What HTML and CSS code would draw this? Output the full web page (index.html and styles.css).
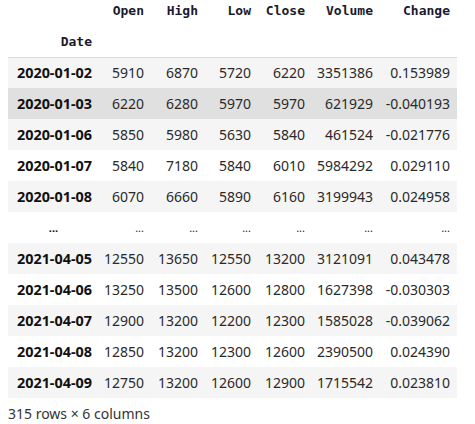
FILE: index.html
```html
<!DOCTYPE html>
<html>
<head>
<meta charset="utf-8">
<link rel="stylesheet" href="styles.css">
</head>
<body>
<div class="frame">
<table class="df">
  <colgroup>
    <col class="c-date"><col class="c-open"><col class="c-high"><col class="c-low"><col class="c-close"><col class="c-vol"><col class="c-chg">
  </colgroup>
  <thead>
    <tr class="h1"><th></th><th>Open</th><th>High</th><th>Low</th><th>Close</th><th>Volume</th><th>Change</th></tr>
    <tr class="h2"><th>Date</th><th></th><th></th><th></th><th></th><th></th><th></th></tr>
  </thead>
  <tbody>
    <tr class="odd"><th>2020-01-02</th><td>5910</td><td>6870</td><td>5720</td><td>6220</td><td>3351386</td><td>0.153989</td></tr>
    <tr class="hover"><th>2020-01-03</th><td>6220</td><td>6280</td><td>5970</td><td>5970</td><td>621929</td><td>-0.040193</td></tr>
    <tr class="odd"><th>2020-01-06</th><td>5850</td><td>5980</td><td>5630</td><td>5840</td><td>461524</td><td>-0.021776</td></tr>
    <tr><th>2020-01-07</th><td>5840</td><td>7180</td><td>5840</td><td>6010</td><td>5984292</td><td>0.029110</td></tr>
    <tr class="odd"><th>2020-01-08</th><td>6070</td><td>6660</td><td>5890</td><td>6160</td><td>3199943</td><td>0.024958</td></tr>
    <tr class="dots"><th>...</th><td>...</td><td>...</td><td>...</td><td>...</td><td>...</td><td>...</td></tr>
    <tr class="odd"><th>2021-04-05</th><td>12550</td><td>13650</td><td>12550</td><td>13200</td><td>3121091</td><td>0.043478</td></tr>
    <tr><th>2021-04-06</th><td>13250</td><td>13500</td><td>12600</td><td>12800</td><td>1627398</td><td>-0.030303</td></tr>
    <tr class="odd"><th>2021-04-07</th><td>12900</td><td>13200</td><td>12200</td><td>12300</td><td>1585028</td><td>-0.039062</td></tr>
    <tr><th>2021-04-08</th><td>12850</td><td>13200</td><td>12300</td><td>12600</td><td>2390500</td><td>0.024390</td></tr>
    <tr class="odd"><th>2021-04-09</th><td>12750</td><td>13200</td><td>12600</td><td>12900</td><td>1715542</td><td>0.023810</td></tr>
  </tbody>
</table>
<p class="shape">315 rows × 6 columns</p>
</div>
</body>
</html>
```

FILE: styles.css
```css
html, body {
  margin: 0;
  padding: 0;
  background: #ffffff;
}
.frame {
  padding: 0 8px;
  font-family: "Noto Sans", "Noto Sans CJK KR", sans-serif;
  color: #2a2a2a;
}
.df {
  border-collapse: collapse;
  border-spacing: 0;
  table-layout: fixed;
  width: 449px;
  font-size: 14px;
}
.c-date { width: 91px; }
.c-open { width: 52px; }
.c-high { width: 54px; }
.c-low { width: 53px; }
.c-close { width: 54px; }
.c-vol { width: 68px; }
.c-chg { width: 77px; }
.df th, .df td {
  padding: 0 7px 0 0;
  text-align: right;
  white-space: nowrap;
  overflow: visible;
}
.df thead th {
  font-family: "DejaVu Sans Mono", monospace;
  font-weight: bold;
  font-size: 13px;
  color: #1a1a2e;
}
.df thead tr.h1 th { height: 26px; vertical-align: middle; padding-bottom: 6px; box-sizing: border-box; }
.df thead tr.h2 th { height: 31px; vertical-align: middle; border-bottom: 1px solid #d9d9d9; box-sizing: border-box; }
.df tbody th {
  font-weight: bold;
  color: #111;
  font-size: 14.4px;
}
.df tbody tr { height: 31px; }
.df tbody td, .df tbody th { vertical-align: middle; }
.df tbody tr.odd { background: #f5f5f5; }
.df tbody tr.hover { background: #e0e0e0; }
.df tbody tr.dots th { text-align: center; padding-right: 0; font-size: 11px; }
.df tbody tr.dots td { font-size: 11px; }
.shape {
  margin: 0;
  padding-top: 6px;
  font-size: 14px;
  color: #333;
}
```
